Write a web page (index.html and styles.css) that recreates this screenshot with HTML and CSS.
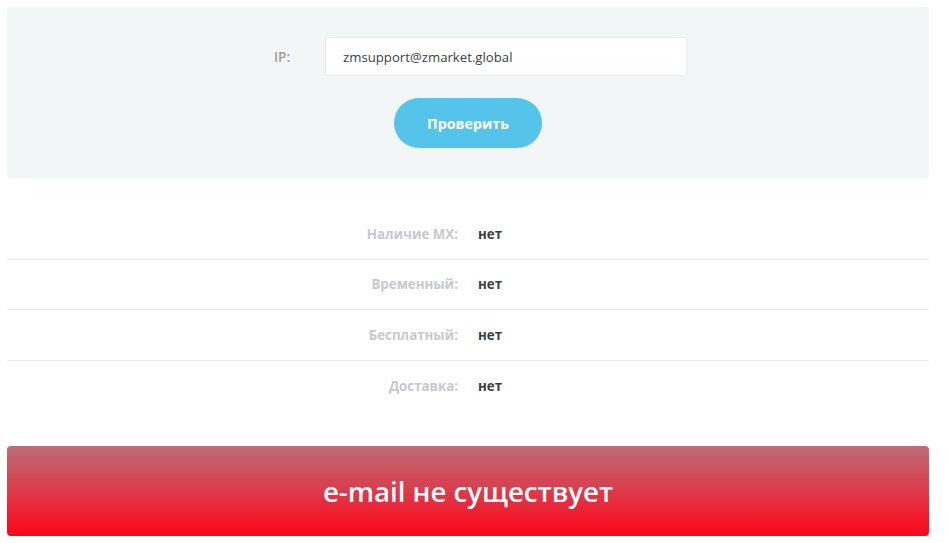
FILE: index.html
```html
<!DOCTYPE html>
<html lang="ru">
<head>
<meta charset="utf-8">
<title>Проверка e-mail</title>
<link rel="stylesheet" href="styles.css">
</head>
<body>
<div class="page">
  <form class="panel">
    <div class="field">
      <label class="field-label" for="ip">IP:</label>
      <input class="field-input" id="ip" type="text" value="zmsupport@zmarket.global">
    </div>
    <button class="btn" type="button">Проверить</button>
  </form>
  <div class="results">
    <div class="row"><span class="key">Наличие MX:</span><span class="val">нет</span></div>
    <div class="row"><span class="key">Временный:</span><span class="val">нет</span></div>
    <div class="row"><span class="key">Бесплатный:</span><span class="val">нет</span></div>
    <div class="row"><span class="key">Доставка:</span><span class="val">нет</span></div>
  </div>
  <div class="status">e-mail не существует</div>
</div>
</body>
</html>
```
FILE: styles.css
```css
* { box-sizing: border-box; }
html, body { margin: 0; padding: 0; background: #fff; }
body { font-family: "Open Sans", "Noto Sans", Arial, sans-serif; }
.page { width: 922px; margin: 7px; }
.panel {
  background: #f3f6f7;
  border-radius: 4px;
  height: 171px;
  padding-top: 30px;
  display: flex;
  flex-direction: column;
  align-items: center;
  margin: 0;
}
.field {
  display: flex;
  align-items: center;
  padding-left: 25px;
}
.field-label {
  width: 51px;
  font-size: 13.5px;
  font-weight: 600;
  color: #9a9ea3;
}
.field-input {
  width: 362px;
  height: 39px;
  border: 1px solid #e9edef;
  border-radius: 2px;
  background: #fff;
  padding: 0 17px;
  font-family: "Open Sans", sans-serif;
  font-size: 13.2px;
  color: #3b3f44;
  outline: none;
}
.btn {
  margin-top: 22px;
  width: 148px;
  height: 50px;
  border: none;
  border-radius: 25px;
  background: #55c4eb;
  color: #fff;
  font-family: "Open Sans", sans-serif;
  font-size: 14.3px;
  font-weight: 700;
  cursor: pointer;
}
.results { margin-top: 31px; margin-bottom: 35px; }
.row {
  display: grid;
  grid-template-columns: 1fr 1fr;
  column-gap: 20px;
  height: 50.5px;
  align-items: center;
  border-bottom: 1px solid #ececec;
}
.row:last-child { border-bottom: none; }
.key {
  text-align: right;
  font-size: 13.3px;
  font-weight: 700;
  color: #c6c9cd;
}
.val {
  font-size: 13.3px;
  font-weight: 700;
  color: #3a3e43;
}
.status {
  height: 90px;
  border-radius: 4px;
  background: linear-gradient(to bottom, #bd6c79 0%, #d9404f 45%, #ff0519 100%);
  color: #fff;
  display: flex;
  align-items: center;
  justify-content: center;
  font-size: 27.6px;
  font-weight: 600;
}
```
